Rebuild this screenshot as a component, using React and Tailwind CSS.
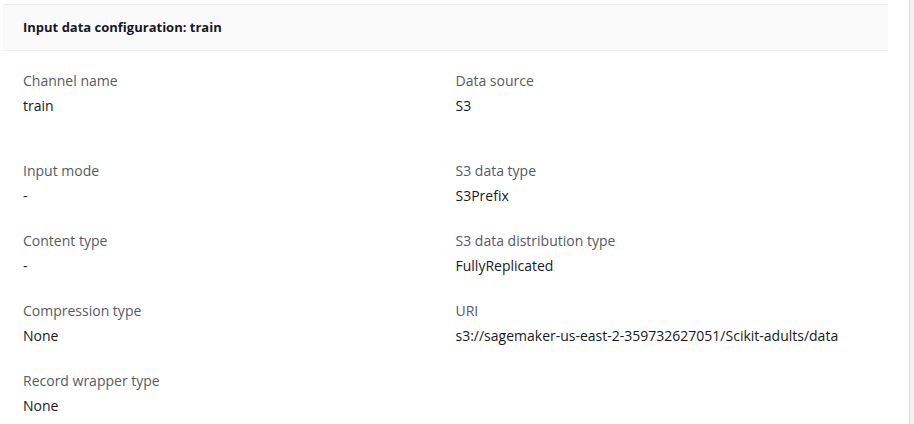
import React from 'react';

const left = [
  { label: 'Channel name', value: 'train' },
  { label: 'Input mode', value: '-' },
  { label: 'Content type', value: '-' },
  { label: 'Compression type', value: 'None' },
  { label: 'Record wrapper type', value: 'None' },
];

const right = [
  { label: 'Data source', value: 'S3' },
  { label: 'S3 data type', value: 'S3Prefix' },
  { label: 'S3 data distribution type', value: 'FullyReplicated' },
  { label: 'URI', value: 's3://sagemaker-us-east-2-359732627051/Scikit-adults/data' },
];

const Field = ({ label, value, first }) => (
  <div className={first ? 'mb-[43px]' : 'mb-[23px]'}>
    <div className="text-[14px] leading-[22px] text-[#545b64]">{label}</div>
    <div className="mt-[3px] text-[14px] leading-[22px] text-[#16191f]">{value}</div>
  </div>
);

export default function App() {
  return (
    <div
      className="flex w-[914px] h-[424px] bg-white overflow-hidden"
      style={{ fontFamily: '"Open Sans", "Noto Sans", Arial, sans-serif' }}
    >
      <div className="w-[909px] pt-[4px] pl-[3px]">
        <div className="w-[885px]">
          {/* Header */}
          <div className="h-[47px] flex items-center px-5 bg-[#fafafa] border-t border-b border-[#eaeded]">
            <h2 className="text-[13px] font-bold text-[#16191f]">Input data configuration: train</h2>
          </div>

          {/* Body */}
          <div className="grid grid-cols-2 gap-x-5 px-5 pt-[19px]">
            <div>
              {left.map((f, i) => (
                <Field key={f.label} {...f} first={i === 0} />
              ))}
            </div>
            <div>
              {right.map((f, i) => (
                <Field key={f.label} {...f} first={i === 0} />
              ))}
            </div>
          </div>
        </div>
      </div>
      <div className="flex-1 border-l border-[#d5dbdb] bg-[#f2f3f3]" />
    </div>
  );
}
